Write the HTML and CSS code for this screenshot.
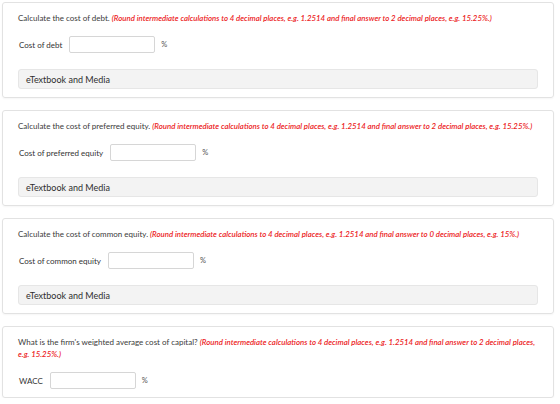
FILE: index.html
```html
<!DOCTYPE html>
<html lang="en">
<head>
    <meta charset="UTF-8">
    <title>Cost of capital</title>
    <link rel="stylesheet" href="styles.css">
</head>
<body>
    <div class="page">
        <div class="card">
            <p class="question">Calculate the cost of debt. <span class="hint">(Round intermediate calculations to 4 decimal places, e.g. 1.2514 and final answer to 2 decimal places, e.g. 15.25%.)</span></p>
            <div class="answer">
                <span class="label">Cost of debt</span>
                <input class="field" type="text">
                <span class="unit">%</span>
            </div>
            <div class="media">eTextbook and Media</div>
        </div>

        <div class="card">
            <p class="question">Calculate the cost of preferred equity. <span class="hint">(Round intermediate calculations to 4 decimal places, e.g. 1.2514 and final answer to 2 decimal places, e.g. 15.25%.)</span></p>
            <div class="answer">
                <span class="label">Cost of preferred equity</span>
                <input class="field" type="text">
                <span class="unit">%</span>
            </div>
            <div class="media">eTextbook and Media</div>
        </div>

        <div class="card">
            <p class="question">Calculate the cost of common equity. <span class="hint">(Round intermediate calculations to 4 decimal places, e.g. 1.2514 and final answer to 0 decimal places, e.g. 15%.)</span></p>
            <div class="answer">
                <span class="label">Cost of common equity</span>
                <input class="field" type="text">
                <span class="unit">%</span>
            </div>
            <div class="media">eTextbook and Media</div>
        </div>

        <div class="card">
            <p class="question">What is the firm's weighted average cost of capital? <span class="hint">(Round intermediate calculations to 4 decimal places, e.g. 1.2514 and final answer to 2 decimal places, <br>e.g. 15.25%.)</span></p>
            <div class="answer">
                <span class="label">WACC</span>
                <input class="field" type="text">
                <span class="unit">%</span>
            </div>
        </div>
    </div>
</body>
</html>
```

FILE: styles.css
```css
body {
    margin: 0;
    font-family: "Lato", "Liberation Sans", sans-serif;
    background: #fff;
    color: #333;
}

.page {
    display: flex;
    flex-direction: column;
    gap: 12px;
    padding: 2px 6px 0 2px;
}

.card {
    border: 1px solid #e2e2e2;
    border-radius: 3px;
    padding: 9px 15px 8px;
    box-shadow: 0 1px 2px rgba(0, 0, 0, 0.04);
}

.question {
    margin: 0;
    font-size: 8px;
    line-height: 12px;
    color: #3a3a3a;
}

.hint {
    color: #ec1c24;
    font-style: italic;
    font-weight: 600;
    font-size: 7.85px;
}

.answer {
    display: flex;
    align-items: center;
    margin-top: 12px;
    padding-left: 1px;
}

.label {
    font-size: 8px;
    color: #333;
}

.field {
    box-sizing: border-box;
    width: 86px;
    height: 17px;
    margin: 0 0 0 7px;
    padding: 0 4px;
    border: 1px solid #d6d6d6;
    border-radius: 2px;
    background: #fff;
}

.unit {
    margin-left: 6px;
    font-size: 7.5px;
    color: #555;
}

.media {
    margin-top: 16px;
    height: 20px;
    box-sizing: border-box;
    padding-left: 7px;
    display: flex;
    align-items: center;
    font-size: 9px;
    color: #2e2e2e;
    background: #f3f3f3;
    border: 1px solid #e6e6e6;
    border-radius: 3px;
}
```
